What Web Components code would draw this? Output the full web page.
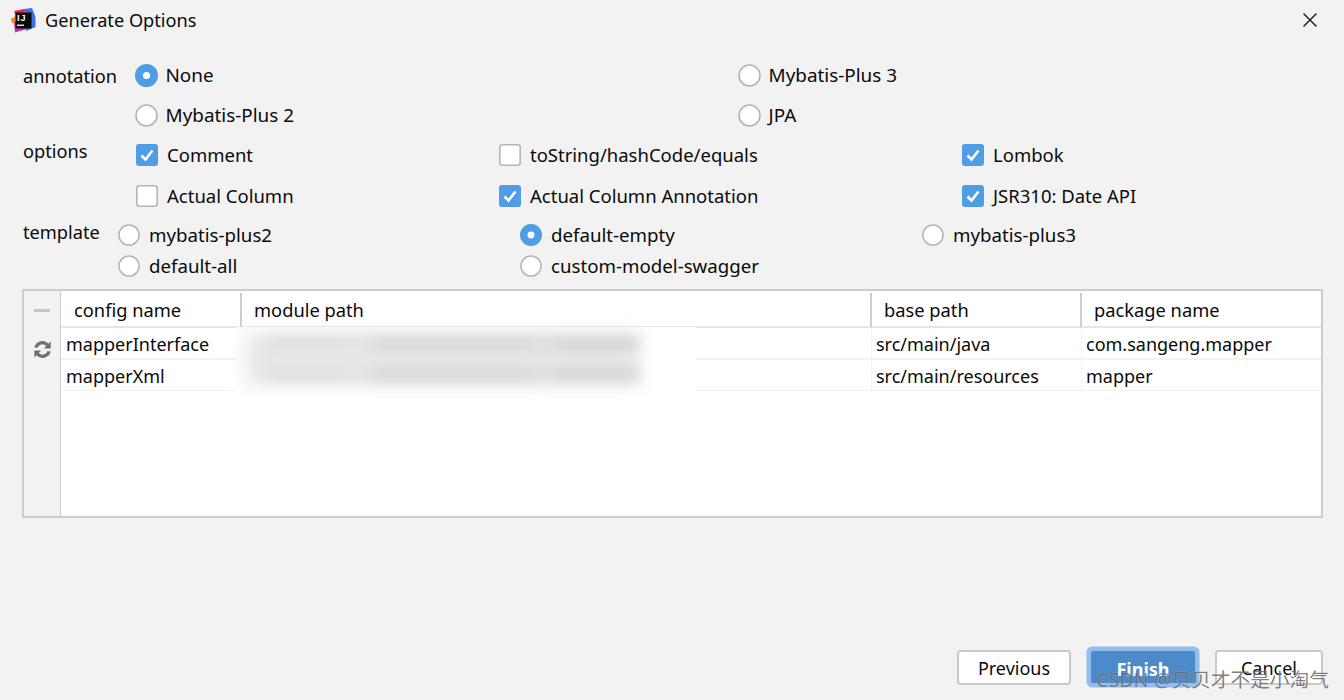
<!DOCTYPE html>
<html>
<head>
<meta charset="utf-8">
<title>Generate Options</title>
<style>
  html, body { margin: 0; padding: 0; }
  body {
    width: 1344px; height: 700px; overflow: hidden; background: #f2f2f2; color: #0a0a0a;
    font: 18px "Noto Sans", "Noto Sans CJK SC", sans-serif;
  }
</style>
</head>
<body>
<generate-dialog>
  <dialog-title slot="title">Generate Options</dialog-title>

  <option-row slot="rows" label="annotation" cols="603px 1fr" pad="135" rowh="40" top="-1" labeltop="0" gap="7.5" box="23" fs="18.9">
    <radio-opt checked>None</radio-opt>
    <radio-opt>Mybatis-Plus 3</radio-opt>
    <radio-opt>Mybatis-Plus 2</radio-opt>
    <radio-opt>JPA</radio-opt>
  </option-row>
  <option-row slot="rows" label="options" cols="363px 463px 1fr" pad="136" rowh="41" top="-1" labeltop="-4" gap="9" box="22" fs="18.5">
    <check-opt checked>Comment</check-opt>
    <check-opt>toString/hashCode/equals</check-opt>
    <check-opt checked>Lombok</check-opt>
    <check-opt>Actual Column</check-opt>
    <check-opt checked>Actual Column Annotation</check-opt>
    <check-opt checked>JSR310: Date API</check-opt>
  </option-row>
  <option-row slot="rows" label="template" cols="402px 402px 1fr" pad="118" rowh="31" top="3" labeltop="1" gap="9" box="22" fs="18.7">
    <radio-opt>mybatis-plus2</radio-opt>
    <radio-opt checked>default-empty</radio-opt>
    <radio-opt>mybatis-plus3</radio-opt>
    <radio-opt>default-all</radio-opt>
    <radio-opt>custom-model-swagger</radio-opt>
  </option-row>

  <config-table slot="table"></config-table>

  <dlg-button slot="buttons" w="114">Previous</dlg-button>
  <dlg-button slot="buttons" w="104" primary>Finish</dlg-button>
  <dlg-button slot="buttons" w="108">Cancel</dlg-button>
</generate-dialog>

<script>
function shadow(el, html) {
  const root = el.attachShadow({ mode: 'open' });
  root.innerHTML = html;
  return root;
}

customElements.define('generate-dialog', class extends HTMLElement {
  constructor() {
    super();
    shadow(this, `
    <style>
      :host { display: flex; flex-direction: column; width: 1344px; height: 700px; position: relative; }
      .rows { display: flex; flex-direction: column; padding: 16px 0 0 0; height: 249px; box-sizing: border-box; }
      .table { padding: 0 21px 0 22px; }
      .buttons { display: flex; justify-content: flex-end; gap: 20px; padding: 132px 21px 0 0; }
      .mark {
        position: absolute; left: 1096px; top: 667px; font-size: 19.7px; line-height: 26px; white-space: nowrap;
        color: rgba(80,80,80,.72); text-shadow: 0 0 1px rgba(255,255,255,.5);
      }
    </style>
    <slot name="title"></slot>
    <div class="rows"><slot name="rows"></slot></div>
    <div class="table"><slot name="table"></slot></div>
    <div class="buttons"><slot name="buttons"></slot></div>
    <div class="mark">CSDN @贝贝才不是小淘气</div>
    `);
  }
});

customElements.define('dialog-title', class extends HTMLElement {
  constructor() {
    super();
    shadow(this, `
    <style>
      :host { display: flex; align-items: center; height: 40px; padding: 0 26px 0 11px; font-size: 18.2px; }
      .logo { width: 25px; height: 25px; margin-right: 9px; }
      .text { flex: 1; line-height: 40px; }
      .close { width: 16px; height: 16px; }
    </style>
    <svg class="logo" viewBox="0 0 25 25">
      <polygon points="13,1 21,0 24.5,9 24.5,19 15,23" fill="#3f6fe0"/>
      <polygon points="3,3 13,1 15,8 6,12" fill="#f0244f"/>
      <polygon points="0,11 6,7 7,16 1,15" fill="#f58a1f"/>
      <polygon points="3,14 8,14 16,21 4,24.5" fill="#c22fb0"/>
      <rect x="4.5" y="4.5" width="16" height="16" fill="#0b0b0b"/>
      <text x="6" y="13" font-family="Liberation Sans" font-size="9" font-weight="700" letter-spacing="1" fill="#fff">IJ</text>
      <rect x="6" y="16.5" width="7" height="1.5" fill="#ddd"/>
    </svg>
    <span class="text"><slot></slot></span>
    <svg class="close" viewBox="0 0 16 16"><path d="M1.5 1.5 L14.5 14.5 M14.5 1.5 L1.5 14.5" stroke="#222" stroke-width="1.5" fill="none"/></svg>
    `);
  }
});

customElements.define('option-row', class extends HTMLElement {
  constructor() {
    super();
    const g = (n) => this.getAttribute(n);
    shadow(this, `
    <style>
      :host { display: block; position: relative; --gap: ${g('gap')}px; --box: ${g('box')}px; }
      .label { position: absolute; left: 23px; top: ${g('labeltop')}px; line-height: ${g('rowh')}px; font-size: 18.2px; }
      .grid {
        display: grid; grid-template-columns: ${g('cols')}; grid-auto-rows: ${g('rowh')}px;
        align-items: center; padding-left: ${g('pad')}px; margin-top: ${g('top')}px; font-size: ${g('fs')}px;
      }
    </style>
    <div class="label">${g('label')}</div>
    <div class="grid"><slot></slot></div>
    `);
  }
});

customElements.define('radio-opt', class extends HTMLElement {
  constructor() {
    super();
    const on = this.hasAttribute('checked');
    shadow(this, `
    <style>
      :host { display: flex; align-items: center; gap: var(--gap); white-space: nowrap; }
      svg { width: var(--box); height: var(--box); flex: none; }
    </style>
    <svg viewBox="0 0 23 23">${on
      ? '<circle cx="11.5" cy="11.5" r="11.5" fill="#4f9de4"/><circle cx="11.5" cy="11.5" r="3.6" fill="#fff"/>'
      : '<circle cx="11.5" cy="11.5" r="10.5" fill="#fff" stroke="#b5b5b5" stroke-width="1.6"/>'}</svg>
    <span><slot></slot></span>
    `);
  }
});

customElements.define('check-opt', class extends HTMLElement {
  constructor() {
    super();
    const on = this.hasAttribute('checked');
    shadow(this, `
    <style>
      :host { display: flex; align-items: center; gap: var(--gap); white-space: nowrap; }
      svg { width: 22px; height: 22px; flex: none; }
    </style>
    <svg viewBox="0 0 22 22">${on
      ? '<rect width="22" height="22" rx="3" fill="#4f9de4"/><path d="M5.5 11.5 L9.5 15.5 L16.5 6.5" stroke="#fff" stroke-width="2.6" fill="none"/>'
      : '<rect x=".8" y=".8" width="20.4" height="20.4" rx="2.5" fill="#fff" stroke="#b5b5b5" stroke-width="1.6"/>'}</svg>
    <span><slot></slot></span>
    `);
  }
});

customElements.define('config-table', class extends HTMLElement {
  constructor() {
    super();
    const rows = [
      ['mapperInterface', 'src/main/java', 'com.sangeng.mapper'],
      ['mapperXml', 'src/main/resources', 'mapper'],
    ];
    shadow(this, `
    <style>
      :host { display: flex; height: 229px; box-sizing: border-box; border: 2px solid #cdcdcd; background: #fff; position: relative; }
      .side { width: 36px; flex: none; background: #f2f2f2; border-right: 1px solid #cdcdcd; display: flex; flex-direction: column; align-items: center; }
      .minus { width: 16px; height: 3px; background: #c4c4c4; margin: 18px 0 0 0; }
      .sync { width: 19px; height: 19px; margin: 28px 0 0 0; }
      .main { flex: 1; min-width: 0; }
      .head, .row { display: grid; grid-template-columns: 180px 630px 210px 1fr; }
      .head { height: 35px; border-bottom: 2px solid #e6e6e6; font-size: 18.3px; }
      .head div { padding: 0 0 0 13px; line-height: 38px; position: relative; }
      .head div + div::before { content: ""; position: absolute; left: -1px; top: 2px; bottom: 2px; width: 2px; background: #cdcdcd; }
      .row { height: 30px; border-bottom: 2px solid #f2f2f2; line-height: 32px; }
      .row:last-of-type { border-bottom-width: 1px; }
      .row div { padding-left: 5px; white-space: nowrap; }
      .row div + div { padding-left: 4px; border-left: 1px solid #f2f2f2; }
      .blur { position: absolute; left: 212px; top: 36px; width: 460px; height: 68px; background: #fff; }
      .smear { position: absolute; left: 221px; top: 42px; height: 52px; width: 394px; background: #e9e9e8; filter: blur(9px); }
      .bar {
        position: absolute; left: 240px; width: 374px; height: 12px; filter: blur(7px);
        background: linear-gradient(90deg, #dedede 0, #dedede 20%, #e4e4e4 26%, #d4d4d3 30%, #d4d4d3 70%, #dcdcdb 75%, #d0d0cf 80%, #d0d0cf 100%);
      }
    </style>
    <div class="side">
      <div class="minus"></div>
      <svg class="sync" viewBox="0 0 20 20" fill="none">
        <path d="M3 8 A7.2 7.2 0 0 1 15.4 5.4" stroke="#707070" stroke-width="3.4"/>
        <path d="M18.6 1.6 V9 H11.4 Z" fill="#707070"/>
        <path d="M17 12 A7.2 7.2 0 0 1 4.6 14.6" stroke="#707070" stroke-width="3.4"/>
        <path d="M1.4 18.4 V11 H8.6 Z" fill="#707070"/>
      </svg>
    </div>
    <div class="main">
      <div class="head"><div>config name</div><div>module path</div><div>base path</div><div>package name</div></div>
      ${rows.map(r => `<div class="row"><div>${r[0]}</div><div></div><div>${r[1]}</div><div>${r[2]}</div></div>`).join('')}
    </div>
    <div class="blur"></div>
    <div class="smear"></div>
    <div class="bar" style="top:47px"></div>
    <div class="bar" style="top:77px"></div>
    `);
  }
});

customElements.define('dlg-button', class extends HTMLElement {
  constructor() {
    super();
    const primary = this.hasAttribute('primary');
    shadow(this, `
    <style>
      :host { display: block; }
      button {
        display: block; font: inherit; width: ${this.getAttribute('w')}px; padding: 0; border-radius: 4px; box-sizing: border-box;
        background: ${primary ? '#4d8aca' : '#fff'}; color: ${primary ? '#fff' : '#0a0a0a'};
        font-weight: ${primary ? 700 : 400};
        border: ${primary ? '0' : '2px solid #c9c9c9'};
        height: ${primary ? 32 : 35}px; line-height: 32px;
        ${primary ? 'box-shadow: 0 0 0 4.5px #93bdee; margin-top: 1px; border-radius: 2px; padding-top: 2px;' : ''}
      }
    </style>
    <button><slot></slot></button>
    `);
  }
});
</script>
</body>
</html>
